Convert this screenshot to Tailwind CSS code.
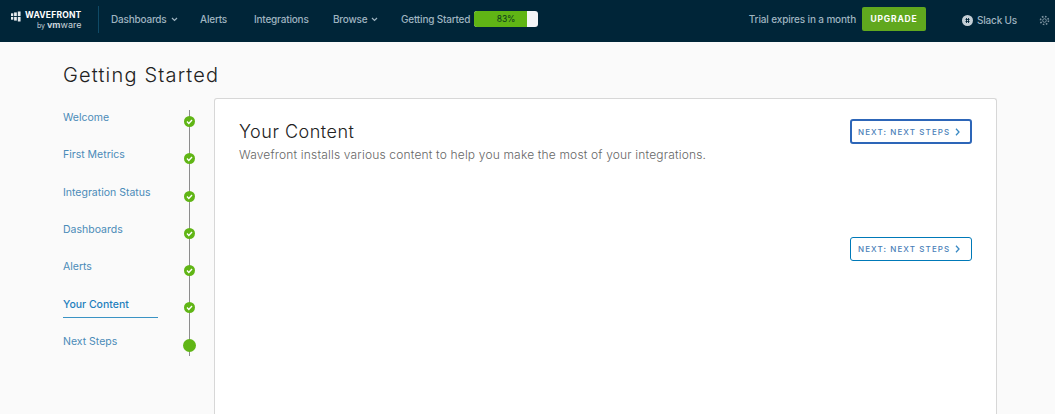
<!DOCTYPE html>
<html lang="en">
<head>
    <meta charset="UTF-8">
    <meta name="viewport" content="width=device-width, initial-scale=1.0">
    <title>Getting Started | Wavefront</title>
    <script src="https://cdn.jsdelivr.net/npm/@tailwindcss/browser@4"></script>
</head>
<body class="bg-[#fafafa] h-[414px] overflow-hidden font-['Inter',sans-serif]">
    <!-- Top bar -->
    <header class="h-[42px] pb-[4px] bg-[#002538] flex items-center text-[#9fb4c0] text-[10px] tracking-[-0.2px] font-medium whitespace-nowrap">
        <div class="w-[99px] h-[27px] shrink-0 border-r border-[#0f4a66] flex pl-[11px] gap-[4px] tracking-normal">
            <svg width="10" height="11" viewBox="0 0 11 11" class="mt-[5px]" fill="#e8edf0">
                <rect x="0" y="2" width="2.5" height="3"/><rect x="3.4" y="1" width="3" height="4"/><rect x="7.5" y="0" width="3" height="5"/>
                <rect x="0" y="6" width="2.5" height="3"/><rect x="3.4" y="6" width="3" height="4"/><rect x="7.5" y="6" width="3" height="5"/>
            </svg>
            <div class="flex flex-col items-end text-white leading-none">
                <span class="text-[8.5px] font-bold tracking-[0.2px] mt-[5px]">WAVEFRONT</span>
                <span class="text-[7px] font-normal mt-[1px] text-[#c9d4da]">by <b class="text-[9px] font-bold">vm</b><span class="text-[9px]">ware</span></span>
            </div>
        </div>
        <nav class="flex items-center ml-[12px]">
            <a class="flex items-center gap-[4px] w-[89px]">Dashboards
                <svg width="7" height="5" viewBox="0 0 7 5" fill="none" stroke="currentColor" stroke-width="1.2"><path d="M1 1l2.5 2.5L6 1"/></svg>
            </a>
            <a class="w-[54px]">Alerts</a>
            <a class="w-[79px]">Integrations</a>
            <a class="flex items-center gap-[4px] w-[68px]">Browse
                <svg width="7" height="5" viewBox="0 0 7 5" fill="none" stroke="currentColor" stroke-width="1.2"><path d="M1 1l2.5 2.5L6 1"/></svg>
            </a>
            <span class="w-[73px]">Getting Started</span>
            <div class="relative w-[64px] h-[16px] rounded-[3px] bg-[#f4f5f7] overflow-hidden flex items-center justify-center text-[#0c3a1c] text-[8.5px] font-normal">
                <div class="absolute left-0 top-0 w-[53px] h-full bg-[#60b515]"></div>
                <span class="relative">83%</span>
            </div>
        </nav>
        <div class="ml-auto flex items-center">
            <span class="mr-[6px] tracking-[-0.15px]">Trial expires in a month</span>
            <button class="w-[64px] h-[24px] rounded-[2px] bg-[#60a81e] text-white text-[8.5px] font-bold tracking-[0.8px]">UPGRADE</button>
            <svg width="11" height="11" viewBox="0 0 11 11" class="ml-[36px] mt-[2px]">
                <circle cx="5.5" cy="5.5" r="5.5" fill="#c4cfd6"/>
                <path d="M3.5 4.5h4M3.5 6.5h4M4.5 3v5M6.5 3v5" stroke="#002538" stroke-width="0.9"/>
            </svg>
            <span class="ml-[4px] w-[61.5px] mt-[2px]">Slack Us</span>
            <svg width="11" height="11" viewBox="0 0 11 11" fill="none" stroke="#7f95a2" class="mr-[5.5px] mt-[2px]">
                <circle cx="5.5" cy="5.5" r="1.8"/>
                <circle cx="5.5" cy="5.5" r="4" stroke-width="1.6" stroke-dasharray="1.6 1.54"/>
            </svg>
        </div>
    </header>

    <main class="pl-[63px] pr-[58px]">
        <h1 class="h-[56px] pt-[18px] text-[20px] leading-[30px] font-light text-[#222] tracking-[1.17px]">Getting Started</h1>

        <div class="flex">
            <!-- Steps -->
            <ol class="w-[151px] shrink-0 relative text-[10.5px] text-[#4a8bb8] pt-[12px]">
                <div class="absolute left-[126px] top-[12px] w-px h-[246px] bg-[#8c8c8c]"></div>
                <li class="h-[37.3px] w-[95px] leading-[15px] relative">Welcome
                    <svg class="absolute left-[121px] top-[6px]" width="11" height="11" viewBox="0 0 11 11"><circle cx="5.5" cy="5.5" r="5.5" fill="#60b515"/><path d="M3 5.6l1.8 1.8L8 4" fill="none" stroke="#fff" stroke-width="1.4"/></svg>
                </li>
                <li class="h-[37.3px] w-[95px] leading-[15px] relative">First Metrics
                    <svg class="absolute left-[121px] top-[6px]" width="11" height="11" viewBox="0 0 11 11"><circle cx="5.5" cy="5.5" r="5.5" fill="#60b515"/><path d="M3 5.6l1.8 1.8L8 4" fill="none" stroke="#fff" stroke-width="1.4"/></svg>
                </li>
                <li class="h-[37.3px] w-[95px] leading-[15px] relative">Integration Status
                    <svg class="absolute left-[121px] top-[6px]" width="11" height="11" viewBox="0 0 11 11"><circle cx="5.5" cy="5.5" r="5.5" fill="#60b515"/><path d="M3 5.6l1.8 1.8L8 4" fill="none" stroke="#fff" stroke-width="1.4"/></svg>
                </li>
                <li class="h-[37.3px] w-[95px] leading-[15px] relative">Dashboards
                    <svg class="absolute left-[121px] top-[6px]" width="11" height="11" viewBox="0 0 11 11"><circle cx="5.5" cy="5.5" r="5.5" fill="#60b515"/><path d="M3 5.6l1.8 1.8L8 4" fill="none" stroke="#fff" stroke-width="1.4"/></svg>
                </li>
                <li class="h-[37.3px] w-[95px] leading-[15px] relative">Alerts
                    <svg class="absolute left-[121px] top-[6px]" width="11" height="11" viewBox="0 0 11 11"><circle cx="5.5" cy="5.5" r="5.5" fill="#60b515"/><path d="M3 5.6l1.8 1.8L8 4" fill="none" stroke="#fff" stroke-width="1.4"/></svg>
                </li>
                <li class="h-[37.3px] w-[95px] leading-[15px] relative font-medium text-[#1f7fbd]">
                    <div class="h-[22px] pt-[1px] border-b border-[#3a93c4]">Your Content</div>
                    <svg class="absolute left-[121px] top-[6px]" width="11" height="11" viewBox="0 0 11 11"><circle cx="5.5" cy="5.5" r="5.5" fill="#60b515"/><path d="M3 5.6l1.8 1.8L8 4" fill="none" stroke="#fff" stroke-width="1.4"/></svg>
                </li>
                <li class="h-[37.3px] w-[95px] leading-[15px] relative">Next Steps
                    <span class="absolute left-[120px] top-[5px] w-[13px] h-[13px] rounded-full bg-[#60b515]"></span>
                </li>
            </ol>

            <!-- Card -->
            <section class="flex-1 h-[316px] bg-white border border-b-0 border-[#d7d7d7] rounded-t-[3px] pl-[24px] pr-[24px] pt-[20px]">
                <div class="flex justify-between h-[118px]">
                    <div>
                        <h2 class="text-[18px] leading-[26px] font-light text-[#222] tracking-[0.5px]">Your Content</h2>
                        <p class="text-[12px] leading-[18px] mt-[1px] font-light text-[#666] tracking-[0.17px]">Wavefront installs various content to help you make the most of your integrations.</p>
                    </div>
                    <a class="w-[122px] h-[25px] border-2 border-[#2d66b8] rounded-[3px] flex items-center justify-between pl-[6px] pr-[10px] text-[8px] tracking-[1.1px] text-[#4a80b8] font-medium">NEXT: NEXT STEPS
                        <svg width="5" height="8" viewBox="0 0 5 8" fill="none" stroke="#3a8ac4" stroke-width="1.3"><path d="M1 .8L4 4 1 7.2"/></svg>
                    </a>
                </div>
                <div class="flex justify-end">
                    <a class="w-[122px] h-[24px] border border-[#0079b8] rounded-[3px] flex items-center justify-between pl-[7px] pr-[11px] text-[8px] tracking-[1.1px] text-[#4a80b8] font-medium">NEXT: NEXT STEPS
                        <svg width="5" height="8" viewBox="0 0 5 8" fill="none" stroke="#3a8ac4" stroke-width="1.3"><path d="M1 .8L4 4 1 7.2"/></svg>
                    </a>
                </div>
            </section>
        </div>
    </main>
</body>
</html>
